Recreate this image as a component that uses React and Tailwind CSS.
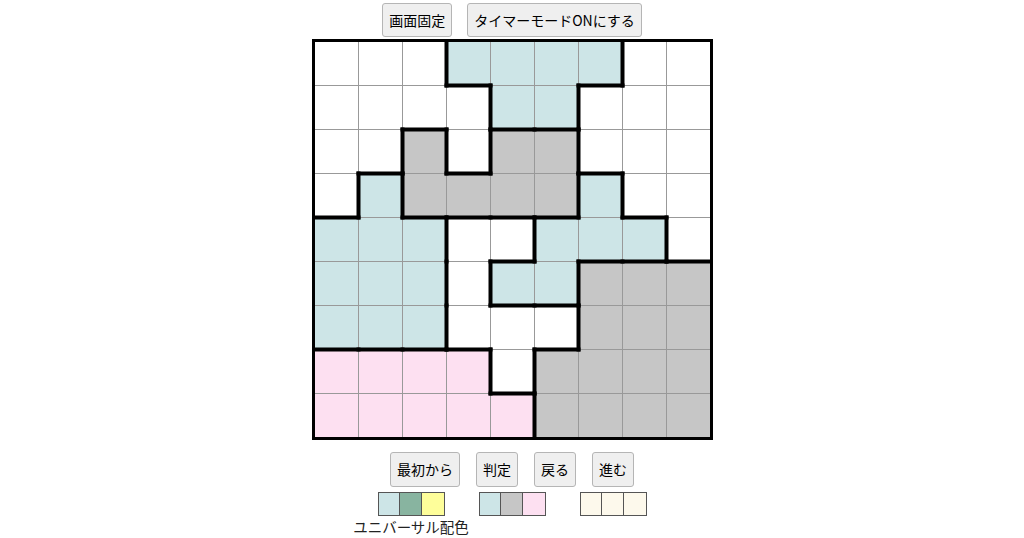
import React from 'react';

// 盤面の色 (W=白, B=水色, G=灰, P=ピンク)
const BOARD = [
    "WWWBBBBWW",
    "WWWWBBWWW",
    "WWGWGGWWW",
    "WBGGGGBWW",
    "BBBWWBBBW",
    "BBBWBBGGG",
    "BBBWWWGGG",
    "PPPPWGGGG",
    "PPPPPGGGG",
];

const CELL_CLASS = {
    W: "bg-white",
    B: "bg-[#cde5e7]",
    G: "bg-[#c6c6c6]",
    P: "bg-[#fde0f1]",
};

const PITCH = 44; // セル43px + 細線1px

// 色の境界に太線を引く
const thickSegments = () => {
    const segs = [];
    for (let r = 0; r < 9; r++) {
        for (let c = 0; c < 9; c++) {
            const v = BOARD[r][c];
            if (c < 8 && BOARD[r][c + 1] !== v) {
                const x = c * PITCH + 43.5;
                segs.push([x, r * PITCH - 0.5, x, r * PITCH + 43.5]);
            }
            if (r < 8 && BOARD[r + 1][c] !== v) {
                const y = r * PITCH + 43.5;
                segs.push([c * PITCH - 0.5, y, c * PITCH + 43.5, y]);
            }
        }
    }
    return segs;
};

const Btn = ({ children, tall }) => (
    <button
        className={
            "bg-[#efefef] border border-[#b5b5b5] rounded-[3px] px-[6px] py-[6px] text-[14px] text-black " +
            (tall ? "leading-[21px]" : "leading-[20px]")
        }
    >
        {children}
    </button>
);

const Swatches = ({ colors }) => (
    <div className="flex border border-[#555] divide-x divide-[#555] h-[24px]">
        {colors.map((c, i) => (
            <div key={i} className={(i === 0 ? "w-[21px] " : "w-[22px] ") + "h-full " + c} />
        ))}
    </div>
);

export default function App() {
    const segs = thickSegments();

    return (
        <div
            className="w-[1024px] h-[538px] bg-white flex flex-col items-center pt-[3px] overflow-hidden"
            style={{ fontFamily: '"Noto Sans CJK JP", "Noto Sans", sans-serif' }}
        >
            {/* 上部ボタン */}
            <div className="flex gap-[15px]">
                <Btn>画面固定</Btn>
                <Btn>タイマーモードONにする</Btn>
            </div>

            {/* 盤面 */}
            <div className="mt-[2px] border-[3px] border-black">
                <div className="relative grid grid-cols-[repeat(9,43px)] auto-rows-[43px] gap-px bg-[#999]">
                    {BOARD.flatMap((row, r) =>
                        row.split("").map((v, c) => (
                            <div key={r + "-" + c} className={CELL_CLASS[v]} />
                        ))
                    )}
                    <svg
                        className="absolute inset-0 overflow-visible pointer-events-none"
                        width="395"
                        height="395"
                    >
                        {segs.map(([x1, y1, x2, y2], i) => (
                            <line
                                key={i}
                                x1={x1}
                                y1={y1}
                                x2={x2}
                                y2={y2}
                                stroke="#000"
                                strokeWidth="4"
                                strokeLinecap="square"
                            />
                        ))}
                    </svg>
                </div>
            </div>

            {/* 操作ボタン */}
            <div className="mt-[12px] flex gap-4">
                <Btn tall>最初から</Btn>
                <Btn tall>判定</Btn>
                <Btn tall>戻る</Btn>
                <Btn tall>進む</Btn>
            </div>

            {/* 配色パレット */}
            <div className="mt-[5px] flex items-start gap-[34px]">
                <div className="w-[67px] flex flex-col items-center">
                    <Swatches colors={["bg-[#cde5e7]", "bg-[#88b4a0]", "bg-[#fefe9a]"]} />
                    <div className="mt-[1px] whitespace-nowrap text-[14.5px] leading-[20px] text-[#222]">
                        ユニバーサル配色
                    </div>
                </div>
                <Swatches colors={["bg-[#cde5e7]", "bg-[#c6c6c6]", "bg-[#fde0f1]"]} />
                <Swatches colors={["bg-[#fdf9ec]", "bg-[#fdf9ec]", "bg-[#fdf9ec]"]} />
            </div>
        </div>
    );
}
